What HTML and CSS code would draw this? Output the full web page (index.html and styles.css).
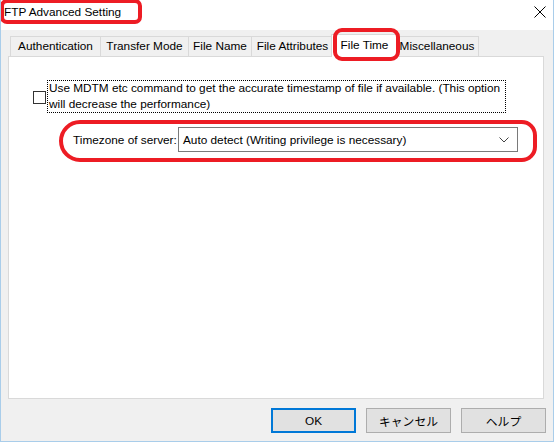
FILE: index.html
```html
<!DOCTYPE html>
<html lang="ja">
<head>
    <meta charset="UTF-8">
    <title>FTP Advanced Setting</title>
    <link rel="stylesheet" href="styles.css">
</head>
<body>
    <div class="window">
        <div class="titlebar">
            <span class="title">FTP Advanced Setting</span>
            <svg class="close" width="12" height="12" viewBox="0 0 12 12">
                <path d="M0.5 0.5 L11.5 11.5 M11.5 0.5 L0.5 11.5" stroke="#000" stroke-width="1" fill="none"/>
            </svg>
        </div>

        <div class="dialog-body">
            <div class="tabs">
                <div class="tab tab-auth">Authentication</div>
                <div class="tab tab-mode">Transfer Mode</div>
                <div class="tab tab-name">File Name</div>
                <div class="tab tab-attr">File Attributes</div>
                <div class="tab tab-time active">File Time</div>
                <div class="tab tab-misc">Miscellaneous</div>
            </div>

            <div class="panel">
                <div class="check-row">
                    <span class="checkbox"></span>
                    <label class="check-label">Use MDTM etc command to get the accurate timestamp of file if available. (This option<br>will decrease the performance)</label>
                </div>
                <div class="tz-row">
                    <span class="tz-label">Timezone of server:</span>
                    <div class="select">
                        <span>Auto detect (Writing privilege is necessary)</span>
                        <svg width="10" height="6" viewBox="0 0 10 6">
                            <path d="M0.5 0.5 L5 5 L9.5 0.5" stroke="#444" stroke-width="1" fill="none"/>
                        </svg>
                    </div>
                </div>
            </div>

            <div class="buttons">
                <button class="btn default">OK</button>
                <button class="btn">キャンセル</button>
                <button class="btn">ヘルプ</button>
            </div>
        </div>

        <div class="mark mark-title"></div>
        <div class="mark mark-tab"></div>
        <div class="mark mark-tz"></div>
    </div>
</body>
</html>
```

FILE: styles.css
```css
body {
    margin: 0;
    font-family: "Liberation Sans", "Noto Sans CJK JP", sans-serif;
    font-size: 11.8px;
    color: #000;
}

.window {
    position: relative;
    width: 554px;
    height: 442px;
    box-sizing: border-box;
    border: 1px solid #a9cdea;
    border-top: none;
    display: flex;
    flex-direction: column;
    overflow: hidden;
}

.titlebar {
    height: 30px;
    background-color: #fff;
    display: flex;
    align-items: center;
    justify-content: space-between;
    padding: 0 7px 0 3px;
    flex-shrink: 0;
}

.title {
    margin-top: -6px;
}

.close {
    margin-top: -6px;
}

.dialog-body {
    flex: 1;
    background-color: #f0f0f0;
    padding: 4px 9px 0 7px;
    display: flex;
    flex-direction: column;
}

.tabs {
    display: flex;
    align-items: flex-end;
    height: 22px;
    padding-left: 2px;
    position: relative;
    z-index: 1;
}

.tab {
    height: 20px;
    box-sizing: border-box;
    border: 1px solid #d9d9d9;
    border-bottom: none;
    margin-left: -1px;
    line-height: 18px;
    text-align: center;
    background-color: #f0f0f0;
    white-space: nowrap;
}

.tab:first-child {
    margin-left: 0;
}

.tab-auth { width: 91px; }
.tab-mode { width: 89px; }
.tab-name { width: 64px; }
.tab-attr { width: 83px; }
.tab-time { width: 67px; }
.tab-misc { width: 84px; }

.tab.active {
    height: 23px;
    margin: 0 -2px -1px -3px;
    background-color: #fff;
    line-height: 20px;
    position: relative;
}

.panel {
    width: 536px;
    height: 343px;
    box-sizing: border-box;
    border: 1px solid #d9d9d9;
    background-color: #fff;
    padding: 23px 0 0 24px;
}

.check-row {
    display: flex;
    align-items: center;
}

.checkbox {
    width: 13px;
    height: 13px;
    box-sizing: border-box;
    border: 1px solid #333;
    margin-top: 2px;
    margin-right: 1px;
}

.check-label {
    width: 459px;
    box-sizing: border-box;
    border: 1px dotted #000;
    padding: 0 1px;
    line-height: 15.5px;
    white-space: nowrap;
}

.tz-row {
    display: flex;
    align-items: center;
    margin-top: 14px;
    padding-left: 40px;
}

.tz-label {
    width: 105px;
    white-space: nowrap;
}

.select {
    width: 340px;
    height: 25px;
    box-sizing: border-box;
    border: 1px solid #7a7a7a;
    display: flex;
    align-items: center;
    justify-content: space-between;
    padding: 0 8px 0 4px;
}

.buttons {
    display: flex;
    justify-content: flex-end;
    gap: 10px;
    margin: 9px -2px 0 0;
}

.btn {
    width: 85px;
    height: 25px;
    font-family: inherit;
    font-size: 11.8px;
    background-color: #e1e1e1;
    border: 1px solid #adadad;
    padding: 0;
}

.btn.default {
    border: 2px solid #0078d7;
}

.mark {
    position: absolute;
    border: 4px solid #ed1c24;
    box-sizing: border-box;
    z-index: 2;
}

.mark-title {
    left: -1px;
    top: -1px;
    width: 142px;
    height: 25px;
    border-radius: 7px;
}

.mark-tab {
    left: 332px;
    top: 28px;
    width: 67px;
    height: 33px;
    border-radius: 9px;
}

.mark-tz {
    left: 58px;
    top: 120px;
    width: 478px;
    height: 42px;
    border-radius: 22px 16px 16px 22px;
}
```
